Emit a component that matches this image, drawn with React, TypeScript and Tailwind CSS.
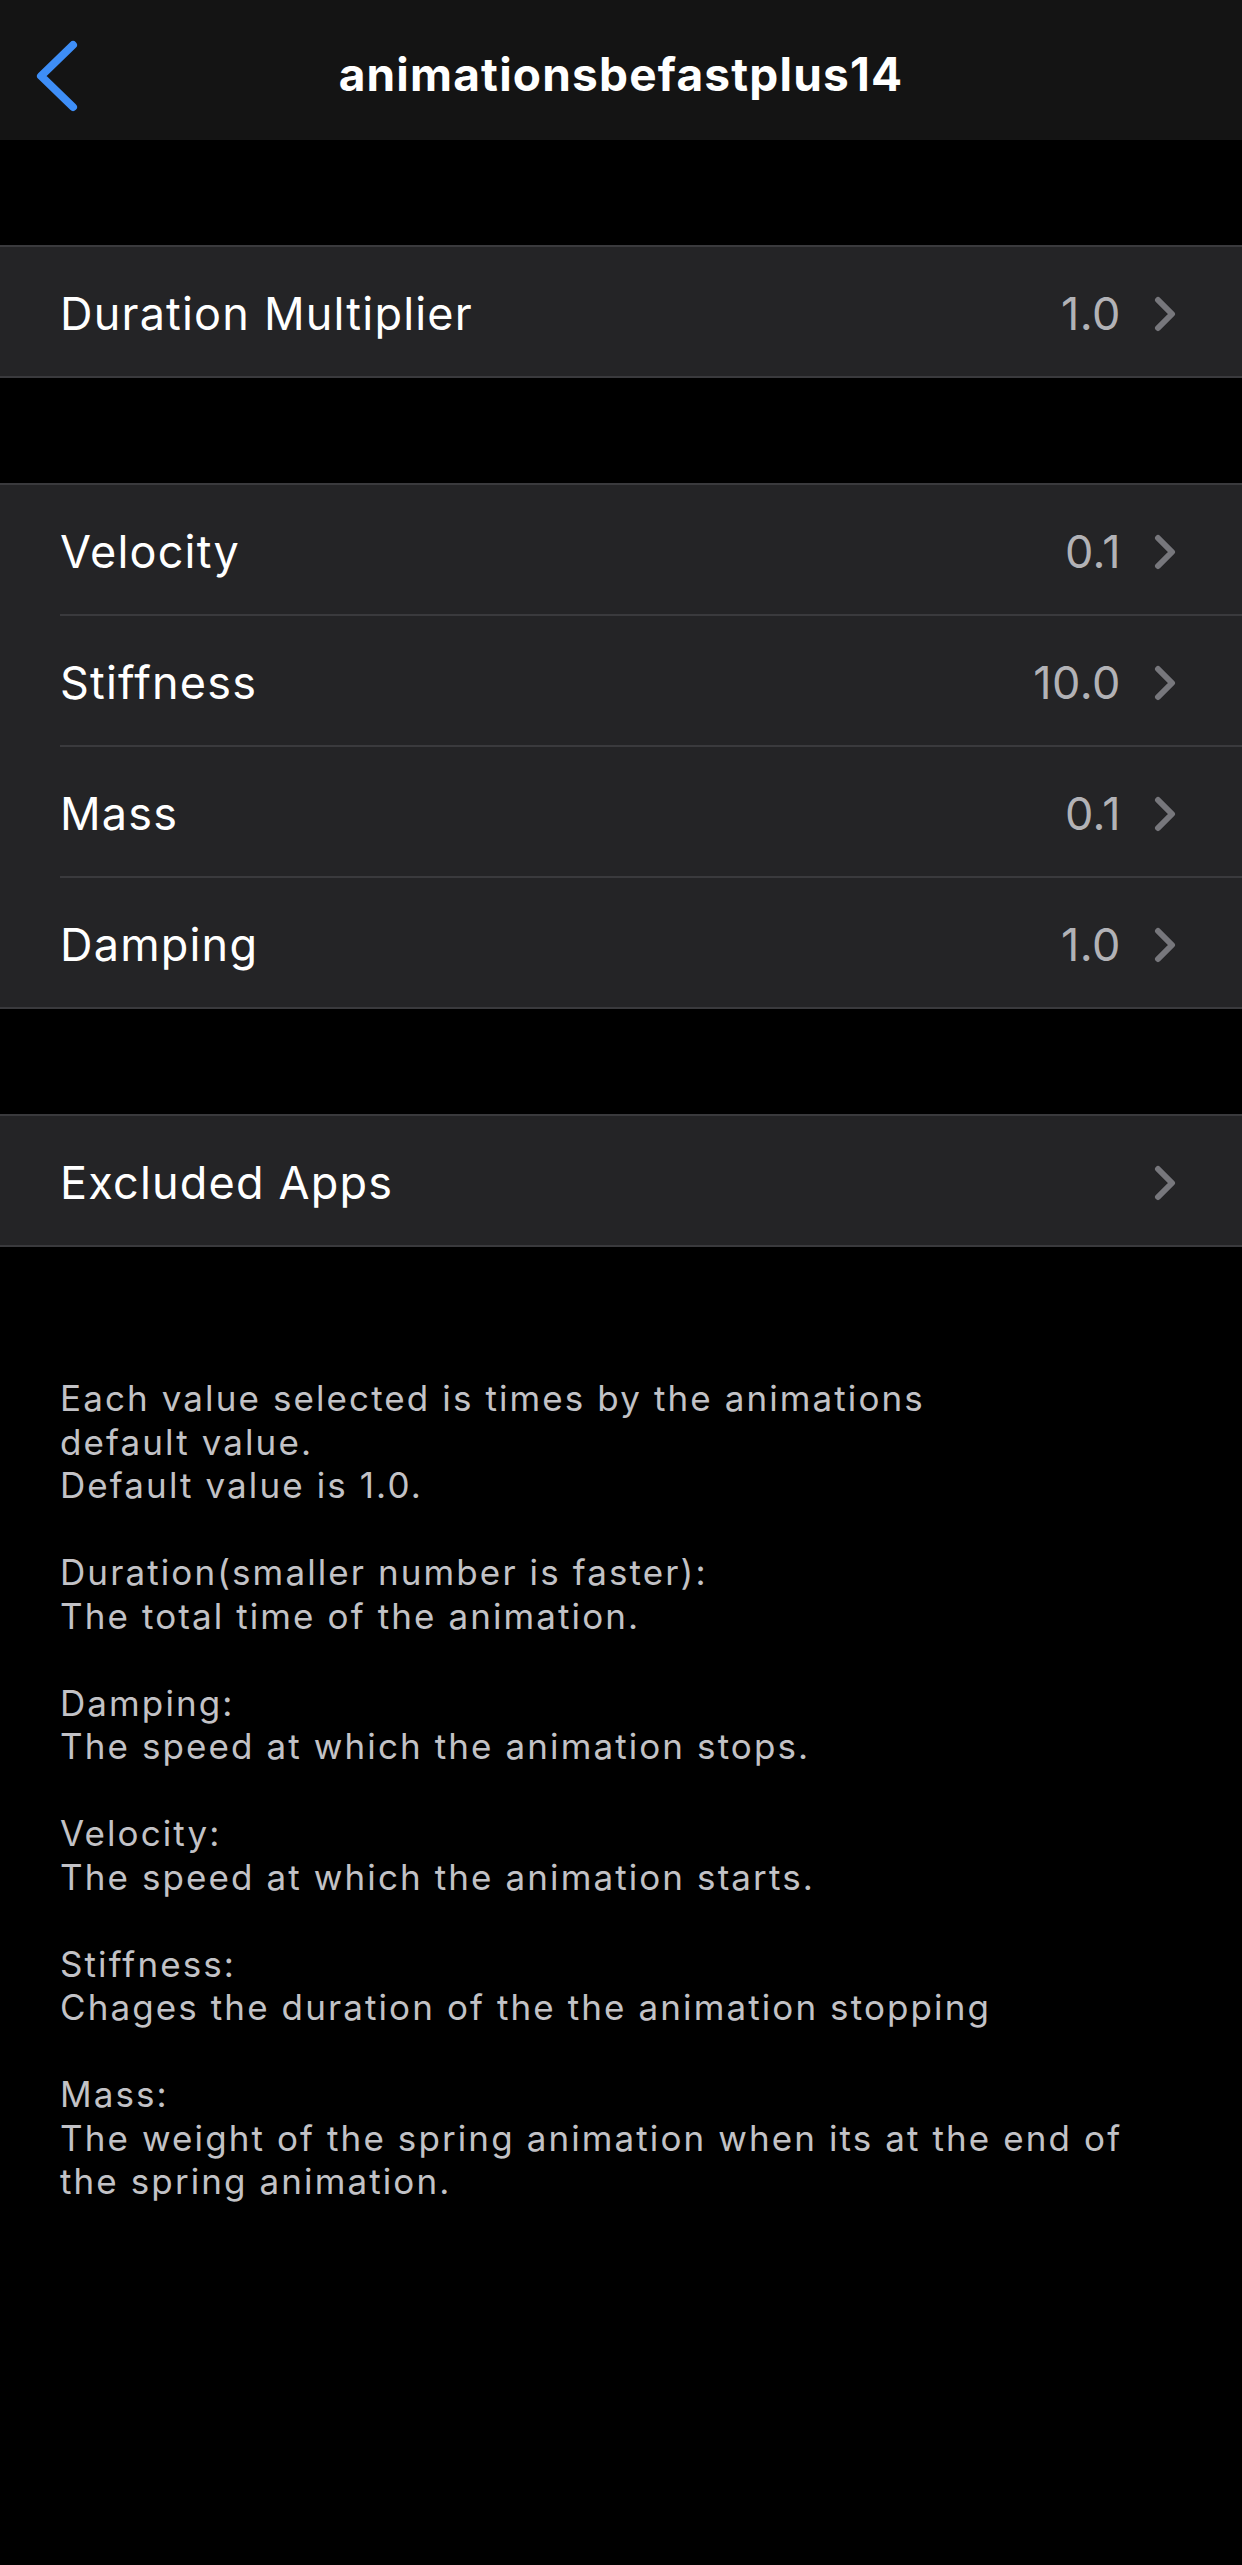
import React from "react";

interface Row {
  label: string;
  value?: string;
}

const groups: Row[][] = [
  [{ label: "Duration Multiplier", value: "1.0" }],
  [
    { label: "Velocity", value: "0.1" },
    { label: "Stiffness", value: "10.0" },
    { label: "Mass", value: "0.1" },
    { label: "Damping", value: "1.0" },
  ],
  [{ label: "Excluded Apps" }],
];

const footer = `Each value selected is times by the animations
default value.
Default value is 1.0.

Duration(smaller number is faster):
The total time of the animation.

Damping:
The speed at which the animation stops.

Velocity:
The speed at which the animation starts.

Stiffness:
Chages the duration of the the animation stopping

Mass:
The weight of the spring animation when its at the end of
the spring animation.`;

const Chevron = () => (
  <svg width="22" height="36" viewBox="0 0 22 36" fill="none">
    <polyline
      points="4,4 18,18 4,32"
      stroke="#77777c"
      strokeWidth="6"
      strokeLinecap="round"
      strokeLinejoin="round"
    />
  </svg>
);

const BackChevron = () => (
  <svg width="46" height="72" viewBox="0 0 46 72" fill="none">
    <polyline
      points="40,5 8,36 40,67"
      stroke="#3e8ef7"
      strokeWidth="8"
      strokeLinecap="round"
      strokeLinejoin="round"
    />
  </svg>
);

const App = () => {
  return (
    <div
      className="min-h-[2565px] w-[1242px] bg-black text-white"
      style={{ fontFamily: "Inter, 'Noto Sans', sans-serif" }}
    >
      {/* nav bar */}
      <div className="relative flex h-[140px] items-center justify-center bg-[#141414]">
        <div className="absolute left-[33px] top-[40px]">
          <BackChevron />
        </div>
        <h1 className="pt-[8px] text-[46px] font-bold tracking-[1.2px]">animationsbefastplus14</h1>
      </div>

      <div className="flex flex-col gap-[105px] pt-[105px]">
        {groups.map((rows, gi) => (
          <div key={gi} className="border-y-2 border-[#3a3a3d] bg-[#242426]">
            {rows.map((row, ri) => (
              <div key={ri} className="pl-[60px]">
                <div
                  className={
                    ri > 0
                      ? "flex h-[131px] items-center border-t-2 border-[#3a3a3d] pr-[66px] pt-[5px]"
                      : "flex h-[129px] items-center pr-[66px] pt-[5px]"
                  }
                >
                  <span className="flex-1 text-[45px] tracking-[1.2px] text-white">{row.label}</span>
                  {row.value && (
                    <span className="mr-[33px] text-[45px] tracking-[0.5px] text-[#b2b2b6]">
                      {row.value}
                    </span>
                  )}
                  <Chevron />
                </div>
              </div>
            ))}
          </div>
        ))}
      </div>

      <p className="mt-[130px] whitespace-pre-line pl-[60px] text-[35px] leading-[43.5px] tracking-[2.1px] text-[#c2c2c6]">
        {footer}
      </p>
    </div>
  );
};

export default App;
